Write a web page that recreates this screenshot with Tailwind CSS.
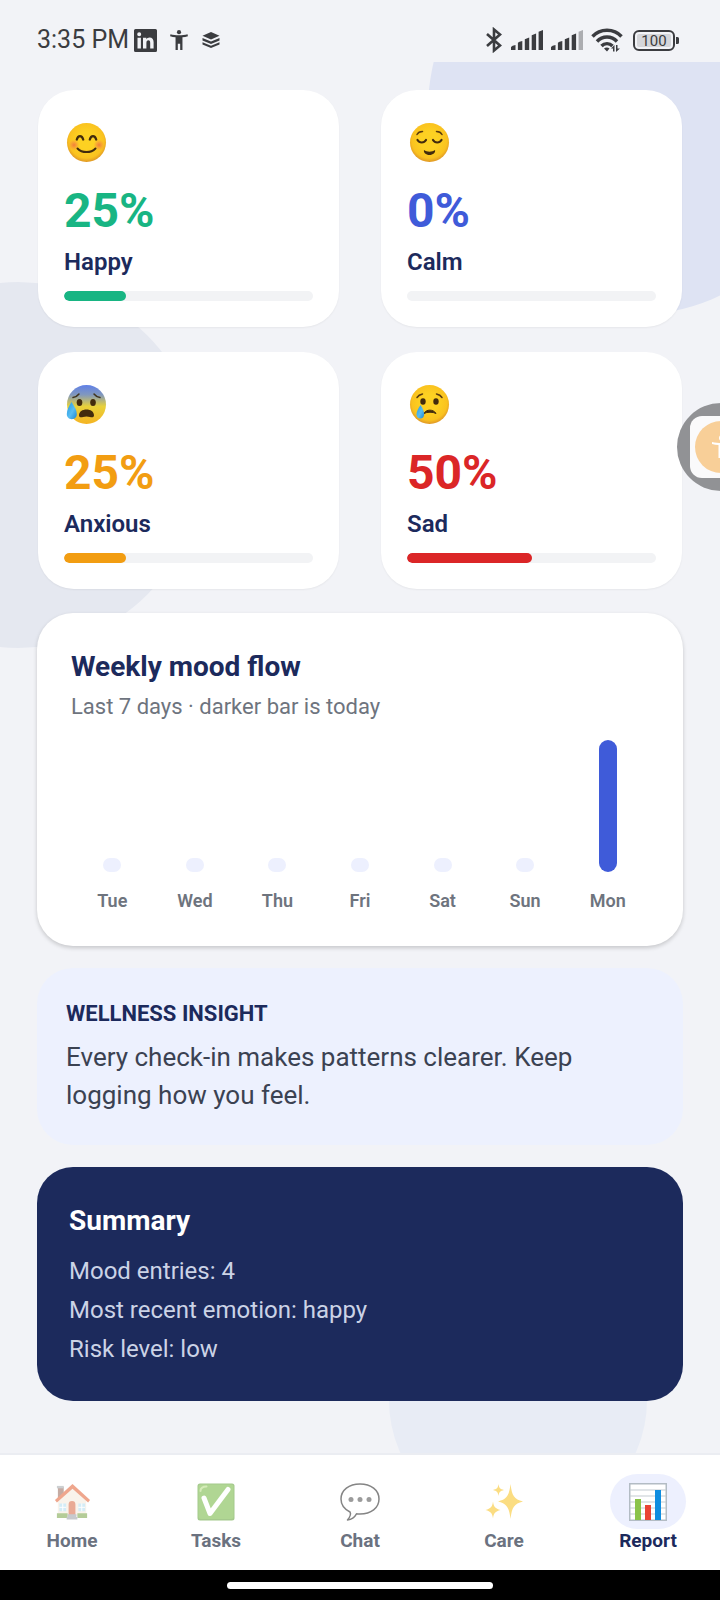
<!DOCTYPE html>
<html lang="en">
<head>
<meta charset="utf-8">
<meta name="viewport" content="width=device-width, initial-scale=1">
<title>Mood report</title>
<script src="https://cdn.jsdelivr.net/npm/@tailwindcss/browser@4"></script>
</head>
<body class="bg-[#f2f3f7] font-['Roboto',sans-serif] text-[#1c2a5c]">
<div class="flex min-h-screen flex-col">

  <header class="flex h-[62px] items-center justify-between pt-[18px] pr-[41px] pl-[37px] text-[#3b3c40]">
    <div class="flex items-center">
      <span class="text-[25px] leading-[30px]">3:35 PM</span>
      <svg class="ml-[5px] size-[23px]" viewBox="0 0 23 23" aria-label="LinkedIn"><path fill="currentColor" fill-rule="evenodd" d="M1.500 0h20A1.500 1.500 0 0 1 23 1.500v20a1.500 1.500 0 0 1-1.500 1.500h-20A1.500 1.500 0 0 1 0 21.500v-20A1.500 1.500 0 0 1 1.500 0zM5.200 3.300a2 2 0 1 0 0 4 2 2 0 0 0 0-4zM3.500 8.800v10.800h3.400V8.800zM9 8.800v10.800h3.400v-5.700c0-1.600.7-2.600 2-2.600s1.800 1 1.800 2.600v5.700h3.400v-6.400c0-3-1.500-4.700-4-4.700-1.500 0-2.600.7-3.300 1.800V8.800z"/></svg>
      <svg class="ml-[12px] size-[20px]" viewBox="0 0 20 22" aria-label="Accessibility"><circle cx="10" cy="2.400" r="2.300" fill="currentColor"/><path fill="currentColor" d="M.6 4.800C6 6.200 14 6.200 19.400 4.800l.4 2c-2 .6-4.200 1-6 1.200V22h-2.500v-7H8.700v7H6.200V8C4.400 7.800 2.200 7.400.2 6.800z"/></svg>
      <svg class="ml-[13px] h-[16px] w-[18px]" viewBox="0 0 18 16" aria-label="Layers"><path fill="currentColor" d="M9 0l8.500 3.800L9 7.600.5 3.800zM.5 6L9 9.600 17.500 6v2.400L9 12 .5 8.400zM.5 10.200L9 13.700l8.500-3.500v2.300L9 16 .5 12.500z"/></svg>
    </div>
    <div class="flex items-center">
      <svg class="h-[26px] w-[18px]" viewBox="0 0 18 26" fill="none" stroke="currentColor" stroke-width="2.600" aria-label="Bluetooth"><path d="M2 7l13 11.500-6 5V2.500l6 5L2 19"/></svg>
      <svg class="ml-[8px] h-[20px] w-[32px]" viewBox="0 0 32 20" fill="currentColor" aria-label="Signal 1"><path d="M0 17q1-1.500 4.500-2v5H0zM6.900 12.800q1-1 4.400-1.700V20H6.900zM13.800 9.300l4.400-1.700V20h-4.400zM20.700 5.300l4.400-1.700V20h-4.400zM27.600 1.700L32 0v20h-4.400z"/></svg>
      <svg class="ml-[8px] h-[20px] w-[32px]" viewBox="0 0 32 20" fill="currentColor" aria-label="Signal 2"><path d="M0 17q1-1.500 4.500-2v5H0zM6.900 12.800q1-1 4.400-1.700V20H6.900zM13.800 9.300l4.400-1.700V20h-4.400zM20.700 5.300l4.400-1.700V20h-4.400z"/><path opacity=".38" d="M27.600 1.700L32 0v20h-4.400z"/></svg>
      <svg class="ml-[8px] h-[24px] w-[32px]" viewBox="0 0 32 24" fill="none" stroke="currentColor" stroke-width="3.400" aria-label="Wi-Fi"><path d="M1.500 8.500C9 .2 23 .2 30.500 8.500M6 13.500c5.500-6 14.500-6 20 0M10.500 18c3-3.200 8-3.200 11 0"/><path stroke="none" fill="currentColor" d="M13 20.500c1.500-1.200 4-1.200 5.500 0L16 23.500zM20 20.500l3.500-3.500v6.500H22v-3zM25 17h1.500v3.500H29L25 24z"/></svg>
      <svg class="ml-[10px] h-[21px] w-[46px]" viewBox="0 0 46 21" aria-label="Battery 100 percent"><rect x="1" y="1" width="40" height="19" rx="5" fill="none" stroke="currentColor" stroke-width="2"/><rect x="4" y="4" width="34" height="13" rx="2" fill="#d5d6da"/><path fill="currentColor" d="M43 7h1.500A1.500 1.500 0 0 1 46 8.500v4a1.500 1.500 0 0 1-1.500 1.500H43z"/><text x="21" y="16" text-anchor="middle" font-family="Roboto" font-size="15" fill="currentColor">100</text></svg>
    </div>
  </header>

  <main class="relative flex-1 overflow-hidden px-[37px] pt-[28px] pb-[51px]">
    <div class="absolute -top-[157px] -right-[118px] size-[410px] rounded-full bg-[#dee3f3]"></div>
    <div class="absolute top-[220px] -left-[165px] size-[366px] rounded-full bg-[#e5e8f0]"></div>
    <div class="absolute bottom-[-76px] left-[54%] size-[258px] rounded-full bg-[#e8ecf5]"></div>

    <div class="relative flex flex-col gap-[22px]">
      <section class="grid grid-cols-2 gap-x-[42px] gap-y-[25px] px-px pb-[2px]" aria-label="Moods">
        <article class="rounded-[36px] bg-white p-[26px] shadow-xs">
          <svg class="mt-[6px] ml-[2px] size-[42px]" viewBox="0 0 42 42" role="img" aria-label="Smiling face">
            <defs>
              <radialGradient id="face" cx=".5" cy=".45" r=".55"><stop offset=".4" stop-color="#fdd122"/><stop offset=".82" stop-color="#fac21f"/><stop offset="1" stop-color="#df9726"/></radialGradient>
              <radialGradient id="blush"><stop offset="0" stop-color="#f0703f" stop-opacity=".85"/><stop offset="1" stop-color="#f4824e" stop-opacity="0"/></radialGradient>
              <linearGradient id="cold" x1="0" y1="0" x2="0" y2="1"><stop offset="0" stop-color="#5f80e8"/><stop offset=".25" stop-color="#8198bd"/><stop offset=".55" stop-color="#e8d13a"/><stop offset="1" stop-color="#f5b423"/></linearGradient>
              <linearGradient id="drop" x1="0" y1="0" x2="1" y2="1"><stop offset="0" stop-color="#2196e0"/><stop offset=".55" stop-color="#58bdf2"/><stop offset="1" stop-color="#1a85d2"/></linearGradient>
            </defs>
            <circle cx="20.500" cy="20.500" r="19.500" fill="url(#face)"/><circle cx="8" cy="23" r="5.500" fill="url(#blush)"/><circle cx="33" cy="23" r="5.500" fill="url(#blush)"/>
            <path d="M10.800 17.500c1.200-4.500 5.200-4.500 6.400 0M23.800 17.500c1.200-4.500 5.200-4.500 6.400 0" fill="none" stroke="#422b0d" stroke-width="2.300" stroke-linecap="round"/><path d="M11.500 26.500c4.500 4.800 13.500 4.800 18 0" fill="none" stroke="#422b0d" stroke-width="2" stroke-linecap="round"/>
          </svg>
          <p class="mt-[19px] text-[48px] leading-[56px] font-bold text-[#18b583]">25%</p>
          <h2 class="mt-[9px] text-[24px] leading-[28px] font-semibold">Happy</h2>
          <div class="mt-[15px] h-[10px] overflow-hidden rounded-full bg-[#f2f3f5]" role="progressbar" aria-label="Happy" aria-valuenow="25"><div class="h-full rounded-full bg-[#18b583]" style="width:25%"></div></div>
        </article>
        <article class="rounded-[36px] bg-white p-[26px] shadow-xs">
          <svg class="mt-[6px] ml-[2px] size-[42px]" viewBox="0 0 42 42" role="img" aria-label="Relieved face">
            <circle cx="20.500" cy="20.500" r="19.500" fill="url(#face)"/>
            <path d="M8 12.500c1-2 3-3 5.500-3M27.500 9.500c2.500 0 4.500 1 5.500 3" fill="none" stroke="#5a3b0e" stroke-width="1.500" stroke-linecap="round"/><path d="M8.500 18c2 3.300 6.500 3.300 8.500 0M24 18c2 3.300 6.500 3.300 8.500 0" fill="none" stroke="#422b0d" stroke-width="2.200" stroke-linecap="round"/><path d="M15 28c3 2.200 8 2.200 11 0 .8 2.500-2 5-5.500 5S14.200 30.500 15 28z" fill="#422b0d"/>
          </svg>
          <p class="mt-[19px] text-[48px] leading-[56px] font-bold text-[#3f5bd9]">0%</p>
          <h2 class="mt-[9px] text-[24px] leading-[28px] font-semibold">Calm</h2>
          <div class="mt-[15px] h-[10px] rounded-full bg-[#f2f3f5]" role="progressbar" aria-label="Calm" aria-valuenow="0"></div>
        </article>
        <article class="rounded-[36px] bg-white p-[26px] shadow-xs">
          <svg class="mt-[6px] ml-[2px] size-[42px]" viewBox="0 0 42 42" role="img" aria-label="Anxious face with sweat">
            <circle cx="20.500" cy="20.500" r="19.500" fill="url(#cold)"/>
            <path d="M7 13.500c2.500-.5 4.500-1.500 6-3.500M28 10c1.500 2 3.500 3 6 3.500" fill="none" stroke="#41351e" stroke-width="1.500" stroke-linecap="round"/><ellipse cx="13.500" cy="18.500" rx="2.800" ry="3.500" fill="#422b0d"/><ellipse cx="27" cy="18.500" rx="2.800" ry="3.500" fill="#422b0d"/>
            <path d="M13 31.500c0-4 3.500-6 7.500-6s7.500 2 7.500 6c0 2-2.500 2-4 1.500-2.500-.8-4.500-.8-7 0-1.500.5-4 .5-4-1.500z" fill="#422b0d"/><path d="M5.500 18C3 22 .8 26 .8 30c0 3.200 2.200 5.200 5 5.200s5-2 5-5.200c0-4-2.600-8-5.300-12z" fill="url(#drop)"/>
          </svg>
          <p class="mt-[19px] text-[48px] leading-[56px] font-bold text-[#f29d12]">25%</p>
          <h2 class="mt-[9px] text-[24px] leading-[28px] font-semibold">Anxious</h2>
          <div class="mt-[15px] h-[10px] overflow-hidden rounded-full bg-[#f2f3f5]" role="progressbar" aria-label="Anxious" aria-valuenow="25"><div class="h-full rounded-full bg-[#f29d12]" style="width:25%"></div></div>
        </article>
        <article class="rounded-[36px] bg-white p-[26px] shadow-xs">
          <svg class="mt-[6px] ml-[2px] size-[42px]" viewBox="0 0 42 42" role="img" aria-label="Crying face">
            <circle cx="20.500" cy="20.500" r="19.500" fill="url(#face)"/>
            <path d="M8 13.500c1.300-2 3-3 5.500-3.500M27.500 10c2.500.5 4.200 1.500 5.500 3.500" fill="none" stroke="#5a3b0e" stroke-width="1.500" stroke-linecap="round"/><ellipse cx="14" cy="17.500" rx="2.700" ry="3.200" fill="#422b0d"/><ellipse cx="27" cy="17.500" rx="2.700" ry="3.200" fill="#422b0d"/><path d="M15 29.500c2-4.500 9.500-4.500 12 0-3-1.700-9-1.700-12 0z" fill="#422b0d" stroke="#422b0d" stroke-linejoin="round"/><path d="M11.500 21c-2 3-4 6.500-4 9.200 0 2.800 1.800 4.300 3.900 4.300s3.700-1.600 3.700-4.300c0-2.800-1.600-6.400-3.600-9.200z" fill="url(#drop)"/>
          </svg>
          <p class="mt-[19px] text-[48px] leading-[56px] font-bold text-[#db2627]">50%</p>
          <h2 class="mt-[9px] text-[24px] leading-[28px] font-semibold">Sad</h2>
          <div class="mt-[15px] h-[10px] overflow-hidden rounded-full bg-[#f2f3f5]" role="progressbar" aria-label="Sad" aria-valuenow="50"><div class="h-full rounded-full bg-[#db2627]" style="width:50%"></div></div>
        </article>
      </section>

      <section class="rounded-[36px] bg-white px-[34px] pt-[36px] pb-[34px] shadow-[0_2px_4px_rgba(0,0,0,0.18)]">
        <h2 class="text-[28px] leading-[36px] font-bold">Weekly mood flow</h2>
        <p class="mt-[8px] text-[22px] leading-[28px] text-[#6e747e]">Last 7 days · darker bar is today</p>
        <div class="mt-[19px] grid grid-cols-7 text-center text-[18px] leading-[22px] font-semibold text-[#6e747e]">
          <div class="flex flex-col items-center gap-[18px]"><div class="flex h-[132px] items-end"><div class="w-[18px] rounded-full bg-[#edf0fe]" style="height:14px"></div></div>Tue</div>
          <div class="flex flex-col items-center gap-[18px]"><div class="flex h-[132px] items-end"><div class="w-[18px] rounded-full bg-[#edf0fe]" style="height:14px"></div></div>Wed</div>
          <div class="flex flex-col items-center gap-[18px]"><div class="flex h-[132px] items-end"><div class="w-[18px] rounded-full bg-[#edf0fe]" style="height:14px"></div></div>Thu</div>
          <div class="flex flex-col items-center gap-[18px]"><div class="flex h-[132px] items-end"><div class="w-[18px] rounded-full bg-[#edf0fe]" style="height:14px"></div></div>Fri</div>
          <div class="flex flex-col items-center gap-[18px]"><div class="flex h-[132px] items-end"><div class="w-[18px] rounded-full bg-[#edf0fe]" style="height:14px"></div></div>Sat</div>
          <div class="flex flex-col items-center gap-[18px]"><div class="flex h-[132px] items-end"><div class="w-[18px] rounded-full bg-[#edf0fe]" style="height:14px"></div></div>Sun</div>
          <div class="flex flex-col items-center gap-[18px]"><div class="flex h-[132px] items-end"><div class="w-[18px] rounded-full bg-[#3f5bd9]" style="height:132px"></div></div>Mon</div>
        </div>
      </section>

      <section class="rounded-[36px] bg-[#edf1fe] px-[29px] pt-[32px] pb-[31px]">
        <h2 class="text-[22px] leading-[28px] font-bold">WELLNESS INSIGHT</h2>
        <p class="mt-[10px] text-[26px] leading-[38px] text-[#3b4252]">Every check-in makes patterns clearer. Keep logging how you feel.</p>
      </section>

      <section class="rounded-[36px] bg-[#1c2a5c] px-[32px] pt-[36px] pb-[32px] text-[#cbd3e6]">
        <h2 class="text-[28px] leading-[36px] font-bold text-white">Summary</h2>
        <ul class="mt-[13px] text-[24px] leading-[39px]">
          <li>Mood entries: 4</li>
          <li>Most recent emotion: happy</li>
          <li>Risk level: low</li>
        </ul>
      </section>
    </div>
  </main>

  <nav class="relative grid grid-cols-5 border-t-2 border-[#ebedf2] bg-white pt-[19px] pb-[18px] text-center text-[19px] leading-[23px] font-bold text-[#6b7280]" aria-label="Main">
    <a href="#home" class="flex flex-col items-center">
      <span class="flex h-[55px] w-[76px] items-center justify-center"><svg class="size-[37px] opacity-50" viewBox="0 0 38 38" aria-hidden="true"><path fill="#8d5a49" d="M4 4h6v14H4z"/><path fill="#9aa0a5" d="M3 3h7v2.500H3z"/><path fill="#f4e9d8" d="M4 18L19 5l14 13v16H4z"/><path fill="#6b9a33" d="M3 31h11v5H3zM24 31h10v5H24z"/><path fill="#e0501e" d="M19 1l18 16.500-2 2.500L19 6 3 20l-2-2.500z"/><path fill="#a9dbf0" d="M5.500 21h7v8h-7zM25 21h7v8h-7z"/><path stroke="#fff" d="M9 21v8M5.500 25h7M28.500 21v8M25 25h7"/><path fill="#d4572e" d="M15 33V22a3.500 3.500 0 0 1 7 0v11z"/><path fill="#90959c" d="M14 32h9v3h1v2.500H13V35h1z"/></svg></span>
      Home
    </a>
    <a href="#tasks" class="flex flex-col items-center">
      <span class="flex h-[55px] w-[76px] items-center justify-center"><svg class="size-[38px] opacity-55" viewBox="0 0 38 38" aria-hidden="true"><rect x=".5" y=".5" width="37" height="37" rx="2.500" fill="#5c9e31"/><rect x="1.500" y="1.500" width="35" height="34.500" rx="2" fill="#70b53b"/><path d="M7 15l6 15.500L31 6.500" fill="none" stroke="#fff" stroke-width="5" stroke-linecap="round" stroke-linejoin="round"/><path d="M3.500 8c0-3 1.500-4.500 6-4.500" fill="none" stroke="#b4dd7f" stroke-width="2" stroke-linecap="round"/></svg></span>
      Tasks
    </a>
    <a href="#chat" class="flex flex-col items-center">
      <span class="flex h-[55px] w-[76px] items-center justify-center"><svg class="size-[40px]" viewBox="0 0 40 40" aria-hidden="true"><path d="M7.500 38c2.500-3 4-5.500 2.500-8C4 27 1 22.500 1 17 1 8 9 2 20 2s19 6 19 15-8 15-19 15c-1.500 0-2.500 0-3.500-.2C14.500 35.500 11 37.500 7.500 38z" fill="#fff" stroke="#858585" stroke-width="1.500" stroke-linejoin="round"/><g fill="#9b9b9b"><circle cx="11" cy="17.500" r="2.500"/><circle cx="20" cy="17.500" r="2.500"/><circle cx="29" cy="17.500" r="2.500"/></g></svg></span>
      Chat
    </a>
    <a href="#care" class="flex flex-col items-center">
      <span class="flex h-[55px] w-[76px] items-center justify-center"><svg class="size-[38px]" viewBox="0 0 38 38" aria-hidden="true"><g fill="#fbdd82"><path d="M25.500 1c1.500 12 3.500 15 12.500 17.500C29 21 27 24 25.500 36 24 24 22 21 13 18.500 22 16 24 13 25.500 1z"/><path d="M8 18.500c.8 5.500 2.200 7 7.500 8.500-5.300 1.500-6.700 3-7.500 8.500C7.200 30 5.800 28.500.5 27c5.300-1.500 6.700-3 7.500-8.500zM13.500 1c.6 4 1.600 5 5.500 6-3.900 1-4.900 2-5.500 6C12.900 9 11.900 8 8 7c3.900-1 4.900-2 5.500-6z"/></g></svg></span>
      Care
    </a>
    <a href="#report" class="flex flex-col items-center text-[#1c2a5c]" aria-current="page">
      <span class="flex h-[55px] w-[76px] items-center justify-center rounded-full bg-[#edf0fe]"><svg class="size-[38px]" viewBox="0 0 38 38" aria-hidden="true"><rect x=".75" y=".75" width="36.500" height="36.500" fill="#fff" stroke="#b3bcc4" stroke-width="1.500"/><path stroke="#c3cbd1" stroke-width="1.200" d="M1 7h36M1 13h36M1 19h36M1 25h36M1 31h36"/><path fill="#8bc34a" d="M6 16h6v21H6z"/><path fill="#ea4335" d="M16 22h6v15h-6z"/><path fill="#0f8de0" d="M26 7h6v30h-6z"/></svg></span>
      Report
    </a>
  </nav>

  <footer class="flex h-[30px] items-center justify-center bg-black"><div class="h-[7px] w-[266px] rounded-full bg-white"></div></footer>
</div>

<button type="button" aria-label="Accessibility menu" class="fixed top-[403px] -right-[45px] flex size-[88px] items-center justify-center rounded-full bg-[#919295]">
  <span class="flex size-[62px] items-center justify-center rounded-[12px] bg-[#fafafb]">
    <svg class="size-[52px]" viewBox="0 0 52 52" aria-hidden="true"><circle cx="26" cy="26" r="26" fill="#f8cf98"/><circle cx="27" cy="17" r="3" fill="#fff"/><path fill="#fff" d="M17 21c6 1.300 14 1.300 20 0v2c-2 .5-4.500.9-6.500 1V37h-2v-6h-3v6h-2V24c-2-.1-4.500-.5-6.500-1z"/></svg>
  </span>
</button>
</body>
</html>
